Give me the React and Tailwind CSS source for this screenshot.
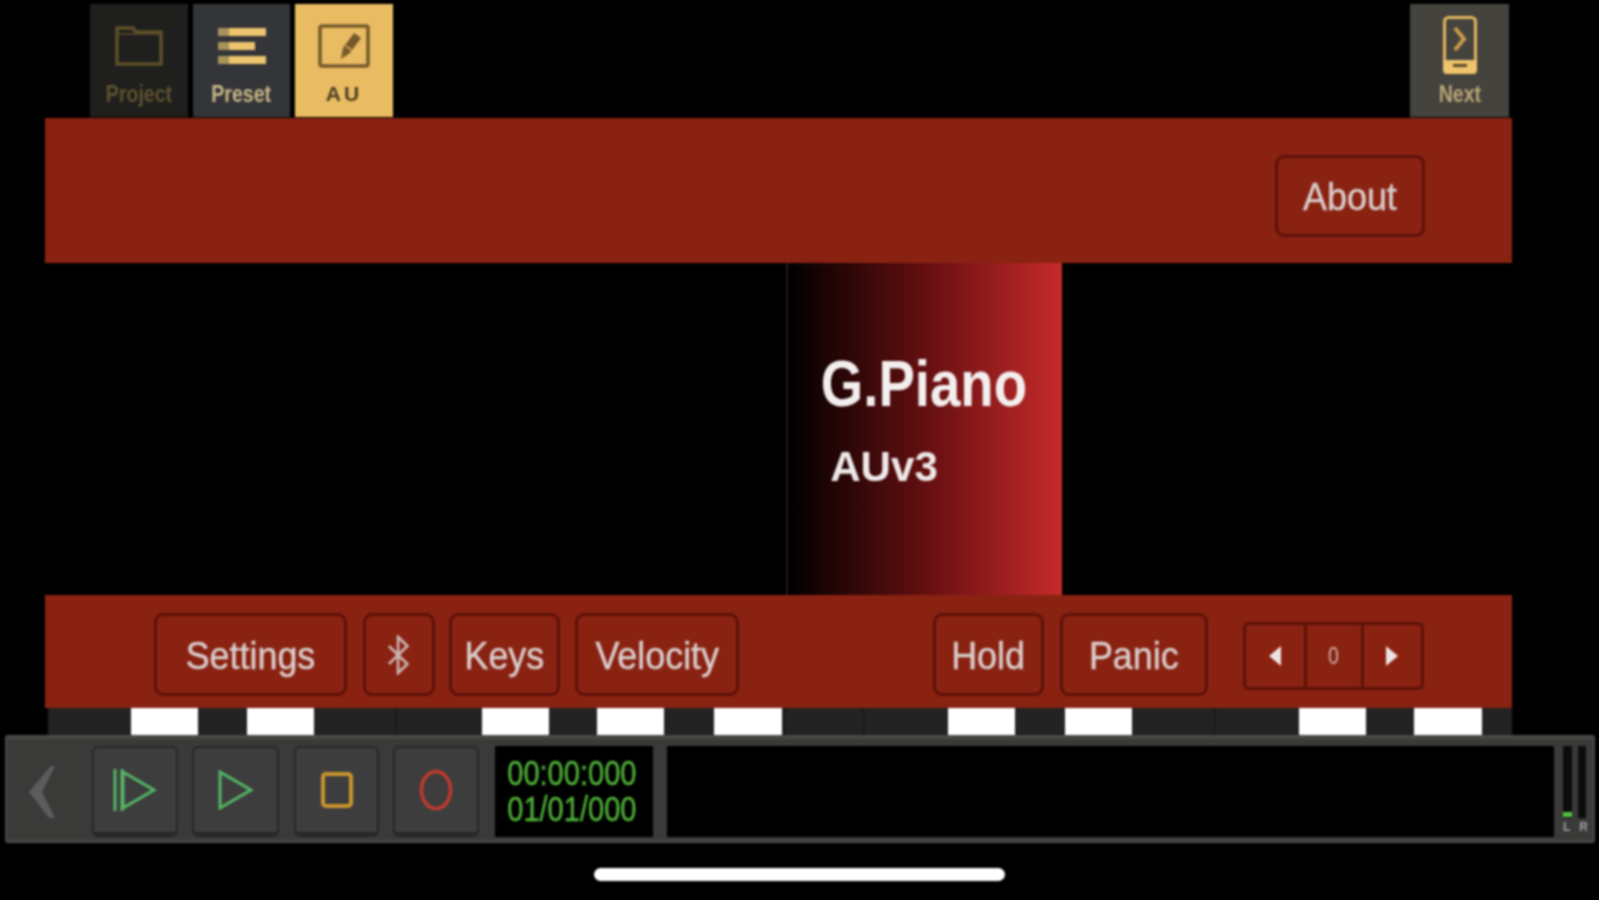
import React from 'react';

const KEYS = [
  [83, 0], [67, 1], [49, 0], [67, 1], [83, 0, 1], [85, 0], [67, 1], [48, 0], [67, 1], [50, 0], [68, 1],
  [3, 0, 1], [79, 0, 1], [84, 0], [67, 1], [50, 0], [67, 1], [83, 0, 1], [84, 0], [67, 1], [48, 0], [68, 1], [30, 0],
];

const Tab = ({ label, className, labelClass, children }) => (
  <div className={`flex h-[113px] flex-col items-center ${className}`}>
    <div className="flex h-[78px] w-full items-center justify-center">{children}</div>
    <span className={`text-[23px] leading-[24px] font-bold scale-x-[0.85] ${labelClass}`}>{label}</span>
  </div>
);

const RedButton = ({ className, children }) => (
  <div className={`flex items-center justify-center rounded-[9px] border-[3px] border-[#5c1207] bg-[#8a2212] pt-[3px] text-[39px] text-[#d9cdcb] [-webkit-text-stroke:0.5px_#d9cdcb] ${className}`}>
    <span className="scale-x-[0.92]">{children}</span>
  </div>
);

const TransportButton = ({ className, children }) => (
  <div className={`flex h-[91px] items-center justify-center rounded-[6px] border-[2px] border-b-[5px] border-[#272727] bg-[#3d3d3d] ${className}`}>
    {children}
  </div>
);

export default function App() {
  return (
    <div className="h-[900px] w-[1599px] overflow-hidden bg-black">
      <div className="flex h-[900px] w-[1599px] flex-col bg-black blur-[1.2px] font-['Liberation_Sans',sans-serif]">
        {/* top tabs */}
        <div className="flex h-[118px] shrink-0 pt-1 pl-[90px]">
          <Tab label="Project" className="w-[98px] bg-[#1f1f1d]" labelClass="text-[#5f5230]">
            <svg width="48" height="42" viewBox="0 0 48 42" fill="none" stroke="#5f5028" strokeWidth="3.5" className="mt-[6px]">
              <path d="M2 39V3h16l3 4h25v32z" />
              <path d="M2 9h44" strokeWidth="1.5" />
            </svg>
          </Tab>
          <Tab label="Preset" className="ml-[5px] w-[97px] bg-[#343538]" labelClass="text-[#c8b788]">
            <svg width="48" height="36" viewBox="0 0 48 36" className="mt-[6px]">
              <rect x="0" y="0" width="11" height="8" fill="#a8935c" />
              <rect x="11" y="0" width="37" height="8" fill="#edc56f" />
              <rect x="0" y="14" width="11" height="8" fill="#a8935c" />
              <rect x="11" y="14" width="26" height="8" fill="#edc56f" />
              <rect x="0" y="28" width="11" height="8" fill="#a8935c" />
              <rect x="11" y="28" width="37" height="8" fill="#edc56f" />
            </svg>
          </Tab>
          <Tab label="AU" className="ml-[5px] w-[98px] bg-[#e9bb62]" labelClass="text-[#4a3d22] tracking-[3px] !scale-x-100 !text-[21px]">
            <svg width="52" height="44" viewBox="0 0 52 44" fill="none" className="mt-[6px]">
              <rect x="2" y="2" width="48" height="40" rx="2" stroke="#75592a" strokeWidth="3.5" />
              <path d="M23 35l2-11 11-15 7 5-11 15z" fill="#75592a" />
              <path d="M28 22l7 5" stroke="#e9bb62" strokeWidth="1.5" />
            </svg>
          </Tab>
          <Tab label="Next" className="ml-[1017px] w-[99px] bg-[#45433e]" labelClass="text-[#b9a678]">
            <svg width="34" height="58" viewBox="0 0 34 58" fill="none" className="mt-[3px]">
              <rect x="1.5" y="1.5" width="31" height="55" rx="4" stroke="#e2b65f" strokeWidth="3" />
              <path d="M0 44h34v10a4 4 0 0 1-4 4H4a4 4 0 0 1-4-4z" fill="#efc46b" />
              <rect x="10" y="48" width="14" height="3" fill="#5a4a28" />
              <path d="M12 12l9 11-9 11" stroke="#c99c4b" strokeWidth="4" />
            </svg>
          </Tab>
        </div>

        {/* about bar */}
        <div className="ml-[45px] flex h-[145px] w-[1467px] shrink-0 items-center justify-end bg-[#8a2212] pr-[87px]">
          <RedButton className="mt-[11px] h-[82px] w-[150px]">About</RedButton>
        </div>

        {/* title block */}
        <div className="flex h-[332px] shrink-0 pl-[786px]">
          <div className="h-full w-[276px] border-l-2 border-[#1c1c1c] bg-linear-to-r/srgb from-black via-[#640f10] via-50% to-[#c62b2b] pt-[84px]">
            <div className="origin-left scale-x-[0.84] pl-[39px] text-[65px] leading-[74px] font-bold whitespace-nowrap text-[#f4efef]">G.Piano</div>
            <div className="mt-[21px] origin-left scale-x-[0.98] pl-[43px] text-[43px] leading-[48px] font-bold whitespace-nowrap text-[#eee8e8]">AUv3</div>
          </div>
        </div>

        {/* controls bar */}
        <div className="ml-[45px] flex h-[113px] w-[1467px] shrink-0 items-start bg-[#8a2212] pt-[18px] pl-[109px]">
          <RedButton className="h-[83px] w-[193px]">Settings</RedButton>
          <RedButton className="ml-[16px] h-[83px] w-[72px]">
            <svg width="30" height="40" viewBox="0 0 30 40" fill="none" stroke="#c9b3ae" strokeWidth="3" className="mb-[3px]">
              <path d="M4 11l20 18-10 9V2l10 9L4 29" />
            </svg>
          </RedButton>
          <RedButton className="ml-[14px] h-[83px] w-[111px]">Keys</RedButton>
          <RedButton className="ml-[15px] h-[83px] w-[164px]">Velocity</RedButton>
          <RedButton className="ml-[194px] h-[83px] w-[111px]">Hold</RedButton>
          <RedButton className="ml-[16px] h-[83px] w-[148px]">Panic</RedButton>
          <div className="mt-[9px] ml-[35px] flex h-[68px] w-[181px] rounded-[6px] border-[3px] border-[#5c1207]">
            <div className="flex flex-1 items-center justify-center">
              <svg width="14" height="20" viewBox="0 0 14 20"><path d="M13 0v20L1 10z" fill="#eee4e2" /></svg>
            </div>
            <div className="flex w-[60px] items-center justify-center border-x-[3px] border-[#5c1207] text-[23px] text-[#cdb5b0]">
              <span className="scale-x-[0.85]">0</span>
            </div>
            <div className="flex flex-1 items-center justify-center">
              <svg width="14" height="20" viewBox="0 0 14 20"><path d="M1 0v20l12-10z" fill="#eee4e2" /></svg>
            </div>
          </div>
        </div>

        {/* keyboard strip */}
        <div className="ml-[48px] flex h-[27px] w-[1464px] shrink-0 bg-[#222322]">
          {KEYS.map(([w, white, line], i) => (
            <div
              key={i}
              style={{ width: w }}
              className={`${white ? 'bg-white' : ''} ${line ? 'border-r border-[#141414]' : ''}`}
            />
          ))}
        </div>

        {/* transport */}
        <div className="ml-[5px] flex h-[108px] w-[1590px] shrink-0 items-center rounded-[3px] border-t-[4px] border-b-[3px] border-x-2 border-[#484846] bg-[#3a3a39] pt-[3px] pl-[85px]">
          <div className="relative flex">
            <svg width="26" height="52" viewBox="0 0 26 52" className="absolute top-[20px] left-[-63px]">
              <path d="M22 0h4L13 26l13 26h-6L0 26z" fill="#5c5c5c" />
            </svg>
            <TransportButton className="w-[86px]">
              <svg width="44" height="44" viewBox="0 0 44 44" fill="none" stroke="#55b565" strokeWidth="3">
                <path d="M2 1v42M9 1v42" />
                <path d="M10 4l31 18-31 18z" />
              </svg>
            </TransportButton>
            <TransportButton className="ml-[14px] w-[87px]">
              <svg width="36" height="42" viewBox="0 0 36 42" fill="none" stroke="#55b565" strokeWidth="3">
                <path d="M2 3l31 18L2 39z" />
              </svg>
            </TransportButton>
            <TransportButton className="ml-[15px] w-[85px]">
              <svg width="32" height="37" viewBox="0 0 32 37" fill="none" stroke="#c8952f" strokeWidth="4">
                <rect x="2" y="3" width="28" height="32" rx="3" />
              </svg>
            </TransportButton>
            <TransportButton className="ml-[14px] w-[86px]">
              <svg width="34" height="42" viewBox="0 0 34 42" fill="none" stroke="#c23b2c" strokeWidth="3.5">
                <ellipse cx="17" cy="21" rx="14.5" ry="18.5" />
              </svg>
            </TransportButton>
          </div>
          <div className="ml-[16px] flex h-[91px] w-[158px] flex-col items-center justify-center bg-black pr-[4px] text-[35px] leading-[36px] text-[#4fb238] [-webkit-text-stroke:0.4px_#4fb238]">
            <span className="scale-x-[0.83]">00:00:000</span>
            <span className="scale-x-[0.83]">01/01/000</span>
          </div>
          <div className="ml-[14px] h-[91px] w-[887px] bg-black" />
          <div className="relative ml-[9px] flex h-[91px] gap-[6px]">
            <div className="h-[72px] w-[9px] bg-[#0c0c0c]">
              <div className="mt-[66px] h-[5px] w-full bg-[#52c23f]" />
            </div>
            <div className="h-[72px] w-[8px] bg-[#0c0c0c]" />
            <div className="absolute top-[74px] left-0 flex gap-[9px] text-[12px] leading-[14px] font-bold text-[#a0a0a0]">
              <span>L</span>
              <span>R</span>
            </div>
          </div>
        </div>

        {/* home indicator */}
        <div className="mt-[25px] ml-[594px] h-[13px] w-[411px] shrink-0 rounded-full bg-white" />
      </div>
    </div>
  );
}
